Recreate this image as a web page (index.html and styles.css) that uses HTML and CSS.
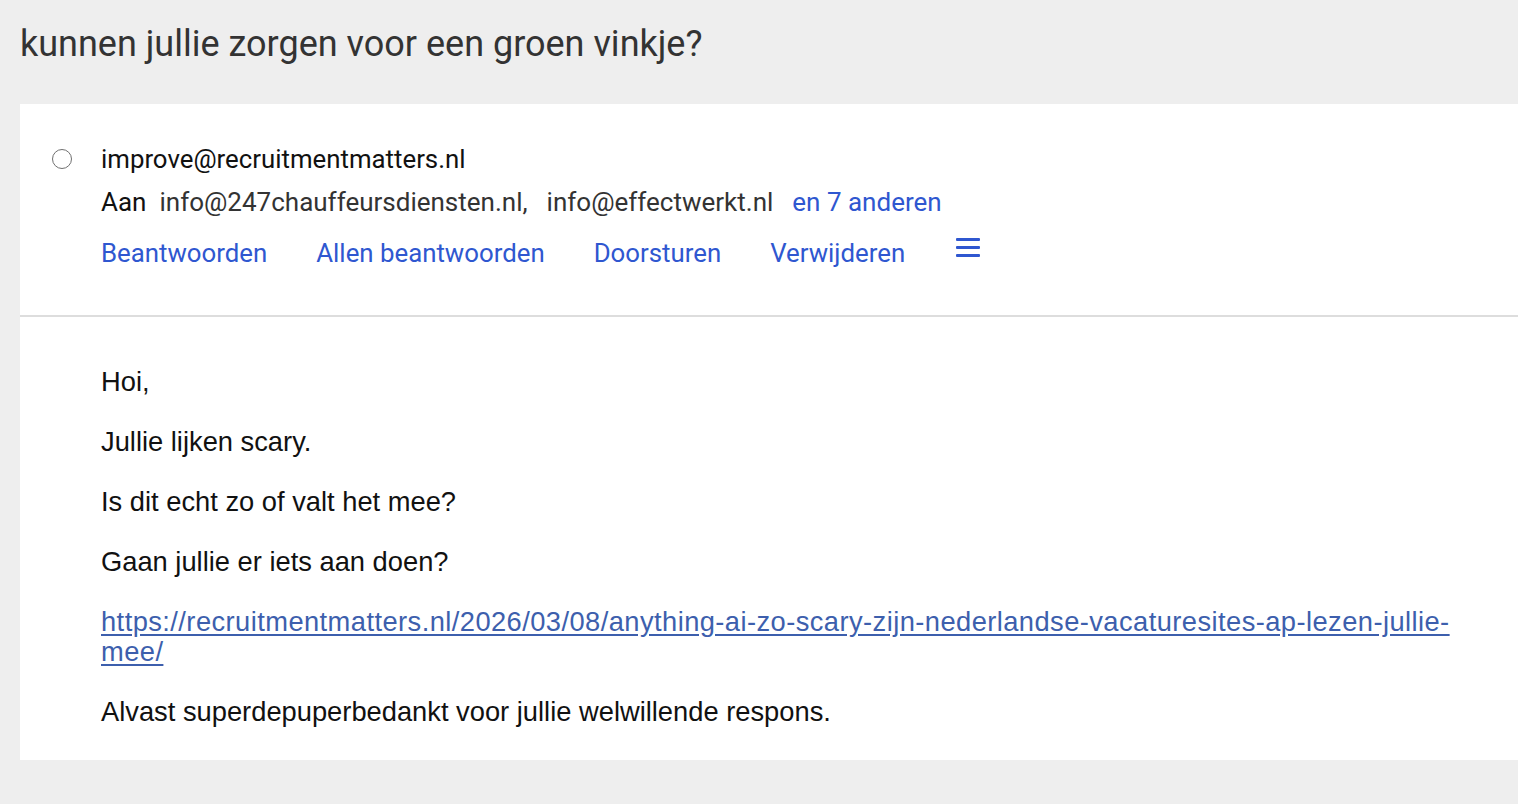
FILE: index.html
```html
<!DOCTYPE html>
<html lang="nl">
<head>
<meta charset="utf-8">
<title>kunnen jullie zorgen voor een groen vinkje?</title>
<link rel="stylesheet" href="styles.css">
</head>
<body>
<div class="page">
  <h1 class="subject">kunnen jullie zorgen voor een groen vinkje?</h1>
  <div class="card">
    <div class="header">
      <div class="radio"></div>
      <div class="meta">
        <div class="from">improve@recruitmentmatters.nl</div>
        <div class="to">
          <span class="to-label">Aan</span>
          <span class="addr">info@247chauffeursdiensten.nl,</span>
          <span class="addr">info@effectwerkt.nl</span>
          <a class="more" href="#">en 7 anderen</a>
        </div>
        <div class="actions">
          <a class="action" href="#">Beantwoorden</a>
          <a class="action" href="#">Allen beantwoorden</a>
          <a class="action" href="#">Doorsturen</a>
          <a class="action" href="#">Verwijderen</a>
          <a class="menu" href="#" aria-label="Meer">
            <svg width="24" height="19" viewBox="0 0 24 19"><rect x="0" y="0" width="24" height="3" rx="1" fill="#2f57d0"/><rect x="0" y="8" width="24" height="3" rx="1" fill="#2f57d0"/><rect x="0" y="16" width="24" height="3" rx="1" fill="#2f57d0"/></svg>
          </a>
        </div>
      </div>
    </div>
    <div class="body">
      <p>Hoi,</p>
      <p>Jullie lijken scary.</p>
      <p>Is dit echt zo of valt het mee?</p>
      <p>Gaan jullie er iets aan doen?</p>
      <p><a class="link" href="#">https://recruitmentmatters.nl/2026/03/08/anything-ai-zo-scary-zijn-nederlandse-vacaturesites-ap-lezen-jullie-mee/</a></p>
      <p>Alvast superdepuperbedankt voor jullie welwillende respons.</p>
    </div>
  </div>
</div>
</body>
</html>
```
FILE: styles.css
```css
html, body {
  margin: 0;
  padding: 0;
}
body {
  background: #eeeeee;
  font-family: Roboto, "Liberation Sans", sans-serif;
  width: 1518px;
  height: 804px;
  overflow: hidden;
}
.page {
  padding: 0 0 0 20px;
}
.subject {
  margin: 0;
  padding: 22px 0 0 0;
  height: 82px;
  box-sizing: border-box;
  font-family: Roboto, sans-serif;
  font-weight: 400;
  font-size: 36px;
  line-height: 44px;
  color: #333333;
}
.card {
  background: #ffffff;
  margin-top: 22px;
}
.header {
  display: flex;
  align-items: flex-start;
  padding: 34px 0 0 32px;
  height: 213px;
  box-sizing: border-box;
  border-bottom: 2px solid #dddddd;
}
.radio {
  width: 20px;
  height: 20px;
  box-sizing: border-box;
  border: 1.6px solid #707070;
  border-radius: 50%;
  margin-top: 11px;
  flex: none;
}
.meta {
  margin-left: 29px;
  font-size: 25.8px;
  line-height: 43px;
}
.from {
  color: #111111;
}
.to {
  color: #333333;
  display: flex;
  font-size: 26px;
}
.to-label {
  color: #111111;
  margin-right: 13px;
}
.addr {
  margin-right: 19px;
}
.more {
  color: #2f57d0;
  text-decoration: none;
}
.actions {
  display: flex;
  align-items: center;
  height: 58px;
}
.action {
  color: #2f57d0;
  text-decoration: none;
  margin-right: 49px;
}
.menu {
  display: flex;
  align-self: flex-start;
  margin-top: 14px;
  margin-left: 2px;
}
.body {
  padding: 50px 37px 33px 81px;
  font-family: "Liberation Sans", Arial, sans-serif;
  font-size: 27.3px;
  line-height: 30px;
  color: #111111;
}
.body p {
  margin: 0 0 30px 0;
}
.body p:last-child {
  margin-bottom: 0;
}
.link {
  color: #3d5fad;
  letter-spacing: 0.43px;
  text-decoration: underline;
  text-underline-offset: 3px;
}
```
